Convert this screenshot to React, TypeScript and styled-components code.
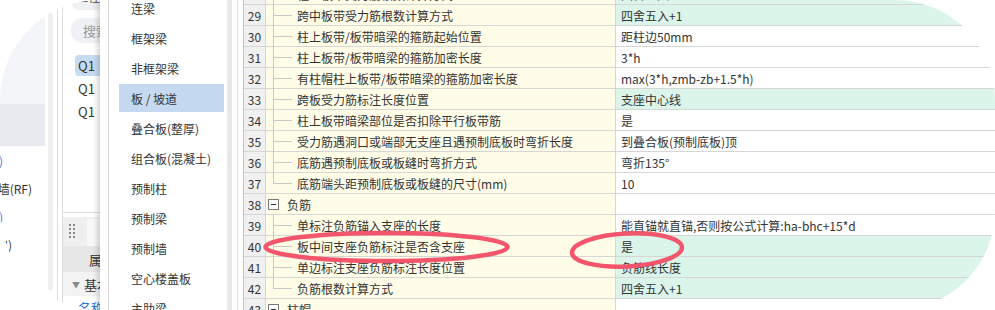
import React from 'react';
import styled, { createGlobalStyle } from 'styled-components';

const Global = createGlobalStyle`
  html, body { margin: 0; padding: 0; background: #fff; }
  body { font-family: "Noto Sans CJK SC", "Noto Sans", sans-serif; }
`;

const Frame = styled.div`
  width: 995px;
  height: 310px;
  border-radius: 100px;
  overflow: hidden;
  position: relative;
  display: flex;
  background: #fff;
  font-size: 12px;
  color: #333;
`;

/* ---------- far-left panel ---------- */
const LeftPanel = styled.div`
  width: 58px;
  flex: none;
  box-sizing: border-box;
  display: flex;
  border-right: 1px solid #dcdcdc;
`;
const LeftContent = styled.div`
  width: 45px;
  margin-right: 3px;
  display: flex;
  flex-direction: column;
`;
const LightArea = styled.div`
  height: 104px;
  background: #f4f5f8;
`;
const Band = styled.div`
  height: 42px;
  background: #e9eaef;
`;
const ClipLine = styled.div<{ $end: number; $color: string }>`
  height: 28px;
  display: flex;
  align-items: center;
  justify-content: flex-end;
  overflow: hidden;
  white-space: nowrap;
  padding-right: ${(p) => 45 - p.$end}px;
  color: ${(p) => p.$color};
  font-size: 12px;
`;
const NoShrink = styled.span`
  flex: none;
`;
const VScroll = styled.div`
  width: 5px;
  margin-top: 13px;
  height: 277px;
  background: #eeeeee;
  border-radius: 3px;
`;

/* ---------- middle panel ---------- */
const MidPanel = styled.div`
  width: 38px;
  margin-left: 4px;
  flex: none;
  box-sizing: border-box;
  border-left: 1px solid #dcdcdc;
  display: flex;
  flex-direction: column;
  overflow: hidden;
`;
const MidTop = styled.div`
  height: 213px;
  flex: none;
  box-sizing: border-box;
  border-bottom: 1px solid #dcdcdc;
  display: flex;
  flex-direction: column;
`;
const TopBox = styled.div`
  margin: -14px 0 0 9px;
  height: 24px;
  background: #eef0f3;
  border-radius: 6px 0 0 6px;
  padding: 4px 0 0 4px;
  box-sizing: border-box;
  line-height: 14px;
  font-size: 12px;
  white-space: nowrap;
  color: #444;
`;
const Search = styled.div`
  margin: 8px 0 0 8px;
  height: 25px;
  background: #f0f1f4;
  border-radius: 12px 0 0 12px;
  display: flex;
  align-items: center;
  padding-left: 12px;
  color: #9a9a9a;
  font-size: 13px;
  white-space: nowrap;
`;
const QList = styled.div`
  margin-top: 12px;
  display: flex;
  flex-direction: column;
  gap: 2px;
`;
const QItem = styled.div<{ $sel?: boolean }>`
  height: 21px;
  margin-left: 12px;
  padding-left: 3px;
  display: flex;
  align-items: center;
  font-size: 13px;
  white-space: nowrap;
  color: #333;
  background: ${(p) => (p.$sel ? '#c6dcf2' : 'transparent')};
  border-radius: 4px 0 0 4px;
`;
const Toolbar = styled.div`
  margin-top: 4px;
  height: 29px;
  flex: none;
  background: #efefef;
  display: flex;
  align-items: center;
  padding-left: 6px;
`;
const ToolWhite = styled.div`
  margin-left: 10px;
  align-self: stretch;
  margin-top: 2px;
  flex: 1;
  background: #f8f8f8;
`;
const PropHeader = styled.div`
  height: 26px;
  flex: none;
  background: #e7e7e7;
  display: flex;
  align-items: center;
  padding-left: 26px;
  white-space: nowrap;
  font-size: 13px;
`;
const PropGroup = styled.div`
  height: 24px;
  flex: none;
  background: #f3f3f3;
  display: flex;
  align-items: center;
  padding-left: 9px;
  gap: 4px;
  white-space: nowrap;
  font-size: 13px;
`;
const Caret = styled.span`
  font-size: 8px;
  color: #888;
`;
const PropLink = styled.div`
  padding: 2px 0 0 15px;
  color: #2b6fd6;
  text-decoration: underline;
  white-space: nowrap;
  font-size: 13px;
`;

/* ---------- dropdown ---------- */
const Dropdown = styled.div`
  width: 138px;
  flex: none;
  box-sizing: border-box;
  position: relative;
  z-index: 1;
  background: #fff;
  box-shadow: -4px 0 5px -1px rgba(0, 0, 0, 0.16);
  padding-left: 8px;
  border-right: 1px solid #dcdcdc;
  display: flex;
`;
const MenuList = styled.div`
  flex: 1;
  border-left: 1px solid #d9d9d9;
  display: flex;
`;
const MenuItems = styled.div`
  width: 118px;
  margin-top: -6px;
  display: flex;
  flex-direction: column;
  gap: 2px;
`;
const MenuItem = styled.div<{ $sel?: boolean }>`
  height: 28px;
  flex: none;
  margin-left: 10px;
  width: 105px;
  padding-left: 12px;
  box-sizing: border-box;
  display: flex;
  align-items: center;
  font-size: 12px;
  color: #333;
  white-space: nowrap;
  background: ${(p) => (p.$sel ? '#c5daf0' : 'transparent')};
`;
const MenuScroll = styled.div`
  width: 5px;
  background: #e8e8e8;
  margin-right: 5px;
`;

/* ---------- table ---------- */
const Table = styled.div`
  flex: 1;
  margin-left: 5px;
  margin-top: -16px;
  border-left: 1px solid #c4c4c4;
  display: flex;
  flex-direction: column;
`;
const Row = styled.div`
  display: grid;
  grid-template-columns: 22px 350px 1fr;
  height: 21px;
  flex: none;
`;
const Cell = styled.div`
  box-sizing: border-box;
  border-bottom: 1px solid #d6d6d6;
  display: flex;
  align-items: center;
  white-space: nowrap;
  overflow: hidden;
`;
const NumCell = styled(Cell)`
  background: #f0f0f0;
  border-right: 1px solid #d6d6d6;
  justify-content: center;
  color: #333;
`;
const NameCell = styled(Cell)`
  background: #fffde8;
  border-right: 1px solid #d6d6d6;
  overflow: visible;
`;
const ValueCell = styled(Cell)<{ $green?: boolean }>`
  background: ${(p) => (p.$green ? '#dcf5ea' : '#ffffff')};
  padding-left: 5px;
`;
const Guide = styled.span<{ $last?: boolean }>`
  width: 26px;
  align-self: stretch;
  flex: none;
  position: relative;
  margin-right: 5px;
  &::before {
    content: '';
    position: absolute;
    left: 7px;
    top: 0;
    bottom: ${(p) => (p.$last ? '50%' : '-1px')};
    width: 1px;
    background: #c9c9c9;
  }
  &::after {
    content: '';
    position: absolute;
    left: 7px;
    right: 0;
    top: 50%;
    height: 1px;
    background: #c9c9c9;
  }
`;
const ToggleBox = styled.span`
  width: 11px;
  height: 11px;
  flex: none;
  box-sizing: border-box;
  border: 1px solid #7a7a7a;
  background: #fff;
  margin: 0 8px 0 2px;
  display: flex;
  align-items: center;
  justify-content: center;
  &::after {
    content: '';
    width: 5px;
    height: 1px;
    background: #333;
  }
`;

const Overlay = styled.svg`
  position: absolute;
  left: 0;
  top: 0;
  pointer-events: none;
`;

type RowData = {
  n: number;
  name: string;
  value?: string;
  green?: boolean;
  group?: boolean;
  last?: boolean;
};

const rows: RowData[] = [
  { n: 28, name: '柱上板带受力筋根数计算方式', value: '四舍五入', green: true },
  { n: 29, name: '跨中板带受力筋根数计算方式', value: '四舍五入+1', green: true },
  { n: 30, name: '柱上板带/板带暗梁的箍筋起始位置', value: '距柱边50mm' },
  { n: 31, name: '柱上板带/板带暗梁的箍筋加密长度', value: '3*h' },
  { n: 32, name: '有柱帽柱上板带/板带暗梁的箍筋加密长度', value: 'max(3*h,zmb-zb+1.5*h)' },
  { n: 33, name: '跨板受力筋标注长度位置', value: '支座中心线', green: true },
  { n: 34, name: '柱上板带暗梁部位是否扣除平行板带筋', value: '是' },
  { n: 35, name: '受力筋遇洞口或端部无支座且遇预制底板时弯折长度', value: '到叠合板(预制底板)顶' },
  { n: 36, name: '底筋遇预制底板或板缝时弯折方式', value: '弯折135°' },
  { n: 37, name: '底筋端头距预制底板或板缝的尺寸(mm)', value: '10', last: true },
  { n: 38, name: '负筋', group: true },
  { n: 39, name: '单标注负筋锚入支座的长度', value: '能直锚就直锚,否则按公式计算:ha-bhc+15*d' },
  { n: 40, name: '板中间支座负筋标注是否含支座', value: '是', green: true },
  { n: 41, name: '单边标注支座负筋标注长度位置', value: '负筋线长度', green: true },
  { n: 42, name: '负筋根数计算方式', value: '四舍五入+1', green: true, last: true },
  { n: 43, name: '柱帽', group: true },
];

const menu = ['连梁', '框架梁', '非框架梁', '板 / 坡道', '叠合板(整厚)', '组合板(混凝土)', '预制柱', '预制梁', '预制墙', '空心楼盖板', '主肋梁'];

const DragDots = () => (
  <svg width="8" height="15" viewBox="0 0 8 15">
    {[0, 1].map((c) =>
      [0, 1, 2, 3].map((r) => <rect key={`${c}-${r}`} x={c * 4} y={r * 4} width="2" height="2" fill="#8a8a8a" />)
    )}
  </svg>
);

export default function App() {
  return (
    <>
      <Global />
      <Frame>
        <LeftPanel>
          <LeftContent>
            <LightArea />
            <Band />
            <ClipLine $end={3} $color="#3d7fe0">
              <NoShrink>连梁(LL)</NoShrink>
            </ClipLine>
            <ClipLine $end={32} $color="#333">
              <NoShrink>剪力墙(RF)</NoShrink>
            </ClipLine>
            <ClipLine $end={3} $color="#4a62d8">
              <NoShrink>暗柱(AZ)</NoShrink>
            </ClipLine>
            <ClipLine $end={12} $color="#333">
              <NoShrink>门窗洞 ′)</NoShrink>
            </ClipLine>
          </LeftContent>
          <VScroll />
        </LeftPanel>

        <MidPanel>
          <MidTop>
            <TopBox>工程</TopBox>
            <Search>搜索</Search>
            <QList>
              <QItem $sel>Q1</QItem>
              <QItem>Q1</QItem>
              <QItem>Q1</QItem>
            </QList>
          </MidTop>
          <Toolbar>
            <DragDots />
            <ToolWhite />
          </Toolbar>
          <PropHeader>属性</PropHeader>
          <PropGroup>
            <Caret>▼</Caret>
            <span>基本</span>
          </PropGroup>
          <PropLink>名称</PropLink>
        </MidPanel>

        <Dropdown>
          <MenuList>
            <MenuItems>
              {menu.map((m) => (
                <MenuItem key={m} $sel={m === '板 / 坡道'}>
                  {m}
                </MenuItem>
              ))}
            </MenuItems>
            <MenuScroll />
          </MenuList>
        </Dropdown>

        <Table>
          {rows.map((r) => (
            <Row key={r.n}>
              <NumCell>{r.n}</NumCell>
              <NameCell>
                {r.group ? <ToggleBox /> : <Guide $last={r.last} />}
                <span>{r.name}</span>
              </NameCell>
              <ValueCell $green={r.green}>{r.value ?? ''}</ValueCell>
            </Row>
          ))}
        </Table>

        <Overlay width="995" height="310" viewBox="0 0 995 310">
          <ellipse cx="386.5" cy="247" rx="121" ry="14" fill="none" stroke="#f3566c" strokeWidth="4.5" />
          <ellipse cx="627" cy="250" rx="55" ry="16.5" fill="none" stroke="#f3566c" strokeWidth="4.5" transform="rotate(-3 627 250)" />
        </Overlay>
      </Frame>
    </>
  );
}
